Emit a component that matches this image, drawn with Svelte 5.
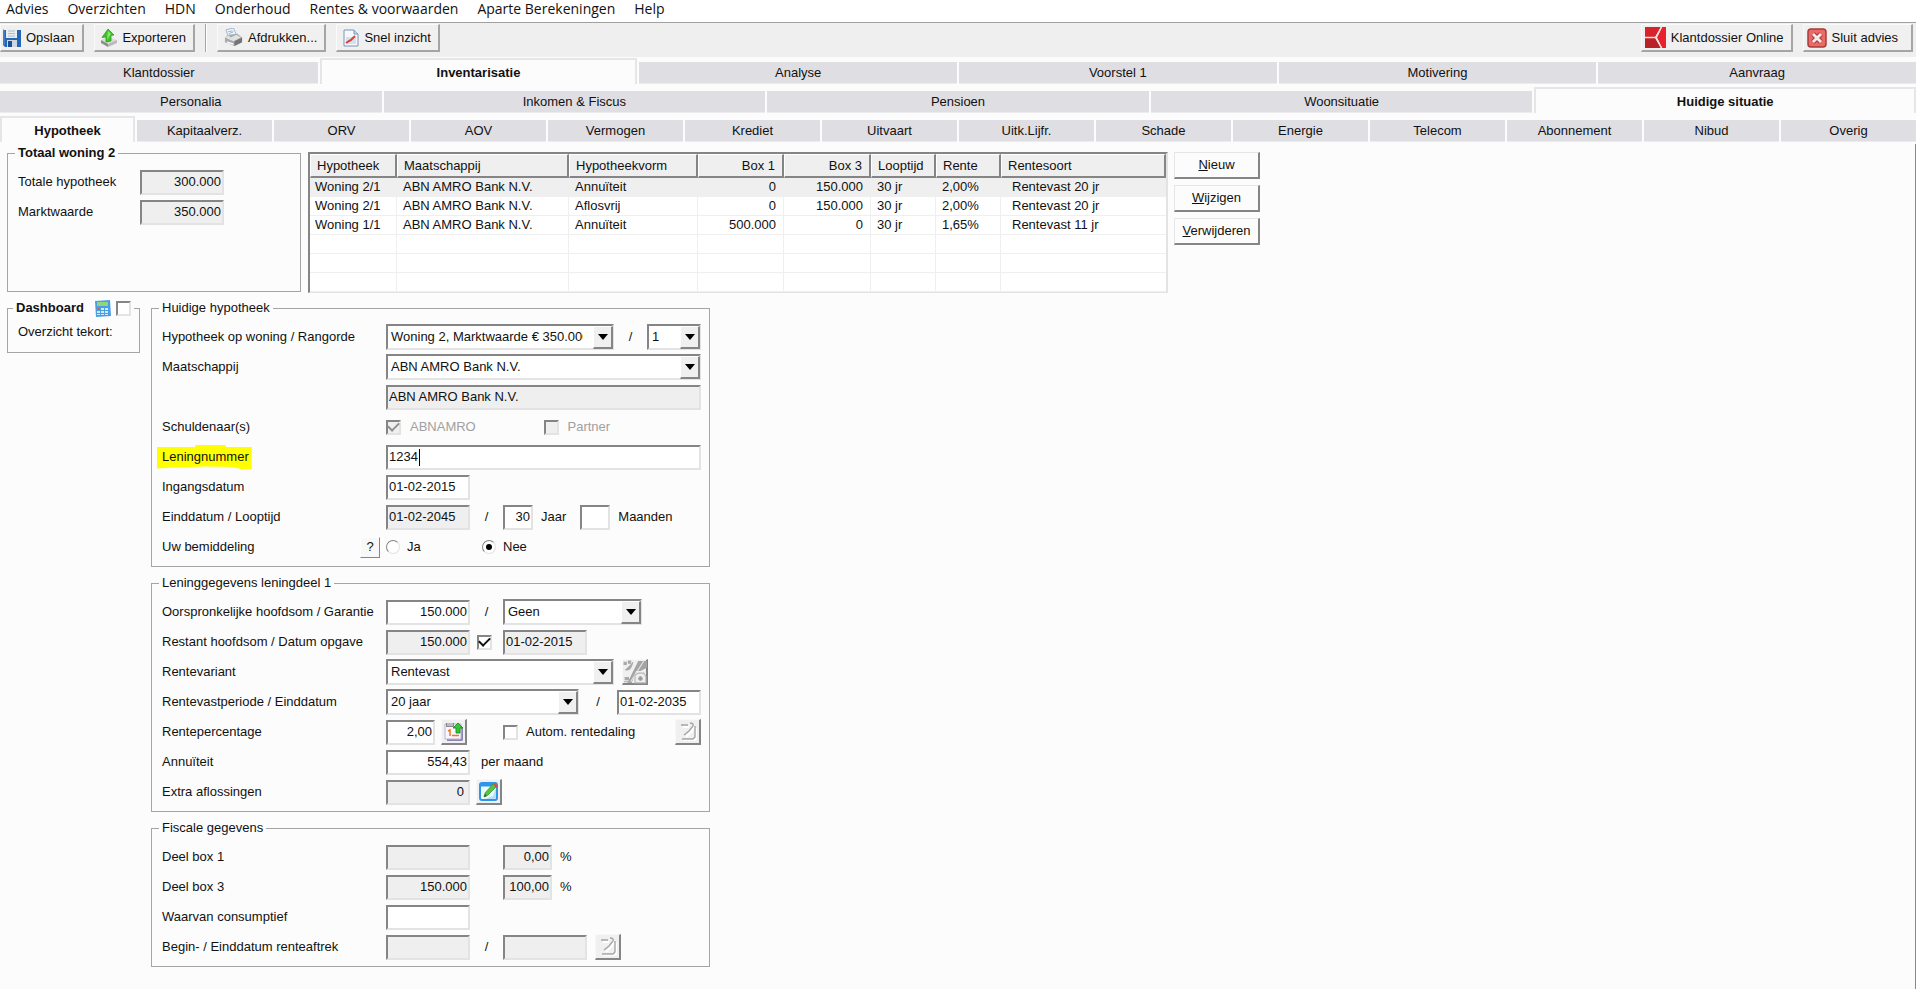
<script lang="ts">
	const menu = ['Advies', 'Overzichten', 'HDN', 'Onderhoud', 'Rentes & voorwaarden', 'Aparte Berekeningen', 'Help'];

	const tabRows = [
		['Klantdossier', 'Inventarisatie', 'Analyse', 'Voorstel 1', 'Motivering', 'Aanvraag'],
		['Personalia', 'Inkomen & Fiscus', 'Pensioen', 'Woonsituatie', 'Huidige situatie'],
		['Hypotheek', 'Kapitaalverz.', 'ORV', 'AOV', 'Vermogen', 'Krediet', 'Uitvaart', 'Uitk.Lijfr.', 'Schade', 'Energie', 'Telecom', 'Abonnement', 'Nibud', 'Overig']
	];
	let active = $state(['Inventarisatie', 'Huidige situatie', 'Hypotheek']);

	const columns = [
		{ label: 'Hypotheek', width: 87 },
		{ label: 'Maatschappij', width: 172 },
		{ label: 'Hypotheekvorm', width: 129 },
		{ label: 'Box 1', width: 86, right: true },
		{ label: 'Box 3', width: 87, right: true },
		{ label: 'Looptijd', width: 65 },
		{ label: 'Rente', width: 65 },
		{ label: 'Rentesoort', width: 165 }
	];
	const loans = [
		['Woning 2/1', 'ABN AMRO Bank N.V.', 'Annuïteit', '0', '150.000', '30 jr', '2,00%', 'Rentevast 20 jr'],
		['Woning 2/1', 'ABN AMRO Bank N.V.', 'Aflosvrij', '0', '150.000', '30 jr', '2,00%', 'Rentevast 20 jr'],
		['Woning 1/1', 'ABN AMRO Bank N.V.', 'Annuïteit', '500.000', '0', '30 jr', '1,65%', 'Rentevast 11 jr']
	];
	const emptyRows = [1, 2, 3];
	let selected = $state(0);
</script>

{#snippet combo(id: string, value: string, size: string, label: string)}
	<span class="combo {size}">
		<select {id} aria-label={label}>
			<option>{value}</option>
		</select>
		<span class="arrow">
			<svg width="10" height="6" viewBox="0 0 10 6"><path d="M0 0h10L5 6z" /></svg>
		</span>
	</span>
{/snippet}

{#snippet noteIcon()}
	<svg width="20" height="20" viewBox="0 0 20 20" fill="none">
		<path d="M4 4h6M17 5v11q0 1-1 1H4M15 3l-2 5-6 6" stroke="#fff" stroke-width="2" transform="translate(1 1)" />
		<path d="M3 3h7M17 4v11l-2 2H4M12 1q4 0 3 3l-4 5-5 4" stroke="#a5a5a5" stroke-width="1.4" />
	</svg>
{/snippet}

<div class="app">
	<nav class="menu">
		{#each menu as item}
			<button>{item}</button>
		{/each}
	</nav>

	<div class="toolbar">
		<button class="tool first">
			<svg width="18" height="18" viewBox="0 0 18 18">
				<path d="M0 1h3v8h11V1h4v17H2l-2-2z" fill="#2467b8" />
				<path d="M3 0h11v9H3z" fill="#e9edf2" />
				<path d="M5 2h7M5 4.500h7M5 7h7" stroke="#b3bcc8" />
				<path d="M4 11h10v7H4z" fill="#cfd6df" />
				<path d="M5 12h4v6H5z" fill="#1d4f96" />
				<path d="M0 1h1v15" stroke="#5b97da" fill="none" />
			</svg>
			Opslaan
		</button>
		<button class="tool">
			<svg width="16" height="18" viewBox="0 0 16 18">
				<path d="M0 11l7-3 9 3-9 5z" fill="#dadada" />
				<path d="M0 11l7 4v3l-7-4z" fill="#8d8d8d" />
				<path d="M7 15l9-4v3l-9 4z" fill="#b9b9b9" />
				<path d="M7 0l6 6-3 .5V12l-5 1V8l-4 .5z" fill="#3fc22b" stroke="#269317" stroke-width=".7" />
				<path d="M7 2l3 3-4 6z" fill="#83ea66" />
			</svg>
			Exporteren
		</button>
		<span class="separator"></span>
		<button class="tool">
			<svg width="19" height="19" viewBox="0 0 20 20">
				<path d="M2 2l8-2 3 7-8 4z" fill="#eef5fc" stroke="#8da5bb" stroke-width=".8" />
				<path d="M4 4l5-1M5 6l5-2" stroke="#8fb5db" />
				<path d="M1 10l4-3 9-1 5 4v5l-8 4-10-4z" fill="#a7a9ab" />
				<path d="M1 10l4-2 2 2 6-3 5 3-8 4z" fill="#e0e1e2" />
				<path d="M11 14l8-4v5l-8 4z" fill="#727578" />
				<path d="M3 14l7 2v2l-7-2z" fill="#f6f6f6" />
			</svg>
			Afdrukken...
		</button>
		<button class="tool">
			<svg width="16" height="18" viewBox="0 0 16 18">
				<path d="M1 1h10l4 4v12H1z" fill="#f5f8fc" stroke="#7896ba" />
				<path d="M11 1v4h4" fill="#c7d7ea" stroke="#7896ba" />
				<path d="M3 8h10v7H3z" fill="#d6dfeb" />
				<path d="M3 14l3-2 2-1 4-4" stroke="#df3d32" stroke-width="2" fill="none" />
			</svg>
			Snel inzicht
		</button>
		<button class="tool push">
			<svg width="21" height="21" viewBox="0 0 21 21">
				<path d="M0 0h16l-6 10H0z" fill="#d8232b" />
				<path d="M0 11h10l6 10H0z" fill="#b82228" />
				<path d="M17 0h4v21h-4l-5-10.500z" fill="#e8212b" />
				<path d="M0 10.500h11L16.500 0M11 10.500L16.500 21" stroke="#f6dede" stroke-width="1.500" fill="none" />
			</svg>
			Klantdossier Online
		</button>
		<button class="tool wide">
			<svg width="20" height="20" viewBox="0 0 20 20">
				<rect x="1" y="1" width="18" height="18" rx="3" fill="#ea6a68" stroke="#a83b3b" stroke-width="1.500" />
				<path d="M6 6l8 8M14 6l-8 8" stroke="#a23737" stroke-width="5" />
				<path d="M6 6l8 8M14 6l-8 8" stroke="#fbe9e9" stroke-width="3" />
			</svg>
			Sluit advies
		</button>
	</div>

	{#each tabRows as row, i}
		<div class="tabs" role="tablist">
			{#each row as tab}
				<button role="tab" aria-selected={active[i] === tab} class:active={active[i] === tab} onclick={() => (active[i] = tab)}>{tab}</button>
			{/each}
		</div>
	{/each}

	<main>
		<div class="overview">
			<fieldset class="total">
				<legend><b>Totaal woning 2</b></legend>
				<div class="row">
					<label for="total-mortgage">Totale hypotheek</label>
					<input id="total-mortgage" class="amount" value="300.000" readonly />
				</div>
				<div class="row">
					<label for="market-value">Marktwaarde</label>
					<input id="market-value" class="amount" value="350.000" readonly />
				</div>
			</fieldset>

			<table>
				<colgroup>
					{#each columns as column}
						<col style="width: {column.width}px" />
					{/each}
				</colgroup>
				<thead>
					<tr>
						{#each columns as column}
							<th class:right={column.right}>{column.label}</th>
						{/each}
					</tr>
				</thead>
				<tbody>
					{#each loans as loan, i}
						<tr class:selected={selected === i} onclick={() => (selected = i)}>
							{#each loan as cell, c}
								<td class:right={columns[c].right}>{cell}</td>
							{/each}
						</tr>
					{/each}
					{#each emptyRows as _}
						<tr>
							{#each columns as _}
								<td></td>
							{/each}
						</tr>
					{/each}
				</tbody>
			</table>

			<div class="actions">
				<button><u>N</u>ieuw</button>
				<button><u>W</u>ijzigen</button>
				<button><u>V</u>erwijderen</button>
			</div>
		</div>

		<div class="detail">
			<fieldset class="dashboard">
				<legend>
					<label for="dashboard"><b>Dashboard</b></label>
					<svg width="16" height="17" viewBox="0 0 16 17">
						<path d="M0 1l15-1 1 16-15 1z" fill="#4a9fe4" />
						<path d="M2 2h11v4H2z" fill="#8fd67c" />
						<path d="M2 8h3v2H2zM6 8h3v2H6zM10 8h3v2h-3zM2 11h3v2H2zM6 11h3v2H6zM10 11h3v2h-3zM2 14h3v1H2zM6 14h3v1H6zM10 14h3v1h-3z" fill="#d3e9fa" />
						<path d="M2 8h3v2H2z" fill="#e0604c" />
					</svg>
					<input id="dashboard" type="checkbox" />
				</legend>
				Overzicht tekort:
			</fieldset>

			<div class="forms">
				<fieldset>
					<legend>Huidige hypotheek</legend>
					<div class="row">
						<label for="property">Hypotheek op woning / Rangorde</label>
						{@render combo('property', 'Woning 2, Marktwaarde € 350.000', 'large', 'Hypotheek op woning')}
						<span class="slash">/</span>
						{@render combo('rank', '1', 'tiny', 'Rangorde')}
					</div>
					<div class="row">
						<label for="company">Maatschappij</label>
						{@render combo('company', 'ABN AMRO Bank N.V.', 'full', 'Maatschappij')}
					</div>
					<div class="row">
						<span class="label"></span>
						<input class="full" aria-label="Naam maatschappij" value="ABN AMRO Bank N.V." readonly />
					</div>
					<div class="row">
						<span class="label">Schuldenaar(s)</span>
						<span class="debtor">
							<input id="debtor" type="checkbox" checked disabled />
							<label for="debtor">ABNAMRO</label>
						</span>
						<span class="debtor">
							<input id="partner" type="checkbox" disabled />
							<label for="partner">Partner</label>
						</span>
					</div>
					<div class="row">
						<label for="loan-number"><mark>Leningnummer</mark></label>
						<span class="editing full">
							<input id="loan-number" class="full" value="1234" />
							<span class="caret"></span>
						</span>
					</div>
					<div class="row">
						<label for="start-date">Ingangsdatum</label>
						<input id="start-date" class="date" value="01-02-2015" />
					</div>
					<div class="row">
						<label for="end-date">Einddatum / Looptijd</label>
						<input id="end-date" class="date" value="01-02-2045" readonly />
						<span class="slash">/</span>
						<input id="years" class="count" value="30" />
						<label class="unit" for="years">Jaar</label>
						<input id="months" class="count months" value="" />
						<label class="unit" for="months">Maanden</label>
					</div>
					<div class="row">
						<span class="label mediation">
							Uw bemiddeling
							<button class="help" aria-label="Help">?</button>
						</span>
						<span class="choice">
							<input id="yes" type="radio" name="mediation" />
							<label for="yes">Ja</label>
						</span>
						<span class="choice">
							<input id="no" type="radio" name="mediation" checked />
							<label for="no">Nee</label>
						</span>
					</div>
				</fieldset>

				<fieldset>
					<legend>Leninggegevens leningdeel 1</legend>
					<div class="row">
						<label for="principal">Oorspronkelijke hoofdsom / Garantie</label>
						<input id="principal" class="amount" value="150.000" />
						<span class="slash">/</span>
						{@render combo('guarantee', 'Geen', 'small', 'Garantie')}
					</div>
					<div class="row">
						<label for="remaining">Restant hoofdsom / Datum opgave</label>
						<input id="remaining" class="amount" value="150.000" readonly />
						<span class="slash tick"><input type="checkbox" aria-label="Datum opgave" checked /></span>
						<input class="date" aria-label="Datum opgave" value="01-02-2015" readonly />
					</div>
					<div class="row">
						<label for="variant">Rentevariant</label>
						{@render combo('variant', 'Rentevast', 'large', 'Rentevariant')}
						<button class="icon spaced" aria-label="Rente" disabled>
							<svg width="24" height="24" viewBox="0 0 22 22">
								<path d="M1 2h2v2H1zM5 1h2v2H5zM2 9q4 1 6-4L9 2M2 16h3v2H2zM1 20h4" fill="#a9a9a9" stroke="#a9a9a9" />
								<path d="M4 21L14 1h8v6l-6 3h-4L8 21z" fill="#a4a4a4" />
								<path d="M19 1L7 20" stroke="#e4e4e4" stroke-width="1" />
								<path d="M11 21V14l3-2h5l2 3v6z" fill="#eee" stroke="#b5b5b5" />
								<path d="M14 17h4M16 15v4" stroke="#999" stroke-width="2" />
							</svg>
						</button>
					</div>
					<div class="row">
						<label for="period">Rentevastperiode / Einddatum</label>
						{@render combo('period', '20 jaar', 'medium', 'Rentevastperiode')}
						<span class="slash grow">/</span>
						<input class="date" aria-label="Einddatum" value="01-02-2035" />
					</div>
					<div class="row">
						<label for="rate">Rentepercentage</label>
						<input id="rate" class="percent" value="2,00" />
						<button class="icon close" aria-label="Rente ophalen">
							<svg width="20" height="20" viewBox="0 0 20 20">
								<path d="M2 5h17v13l-1 1H3z" fill="#8f86b4" />
								<path d="M1 2h16v15H1z" fill="#f7f6fc" stroke="#b9b3d6" />
								<path d="M2 1h8v4H2z" fill="#8b8891" />
								<path d="M4 1v3M6 1v3M8 1v3" stroke="#eee" />
								<path d="M4 9l2-1v6M8 13.500h7" stroke="#ef7622" stroke-width="1.500" fill="none" />
								<path d="M14 1l5 5h-3v5h-4V6H9z" fill="#34c934" stroke="#14821a" stroke-width=".8" />
							</svg>
						</button>
						<span class="auto">
							<input id="auto" type="checkbox" />
							<label for="auto">Autom. rentedaling</label>
						</span>
						<button class="icon end" aria-label="Rentedaling bewerken" disabled>{@render noteIcon()}</button>
					</div>
					<div class="row">
						<label for="annuity">Annuïteit</label>
						<input id="annuity" class="amount" value="554,43" />
						<span class="per-month">per maand</span>
					</div>
					<div class="row">
						<label for="extra">Extra aflossingen</label>
						<input id="extra" class="amount extra" value="0" readonly />
						<button class="icon close" aria-label="Extra aflossingen bewerken">
							<svg width="20" height="20" viewBox="0 0 20 20">
								<rect x="1" y="1" width="17" height="17" rx="2" fill="#eef8ff" stroke="#2f95e8" stroke-width="2" />
								<path d="M1 3h13" stroke="#2f95e8" stroke-width="3" />
								<path d="M17 6v11H6l8-3z" fill="#b6def8" />
								<path d="M5 15l1-4 8-9 3 3-8 8z" fill="#58c43c" stroke="#2d9527" stroke-width=".7" />
								<path d="M14 2l2-1 3 3-2 2z" fill="#e34a3c" />
								<path d="M5 15l1-3 2 2z" fill="#31583a" />
							</svg>
						</button>
					</div>
				</fieldset>

				<fieldset>
					<legend>Fiscale gegevens</legend>
					<div class="row">
						<label for="box1">Deel box 1</label>
						<input id="box1" class="amount" value="" readonly />
						<span class="slash"></span>
						<input id="box1-part" class="percent" value="0,00" readonly />
						<label class="unit" for="box1-part">%</label>
					</div>
					<div class="row">
						<label for="box3">Deel box 3</label>
						<input id="box3" class="amount" value="150.000" readonly />
						<span class="slash"></span>
						<input id="box3-part" class="percent" value="100,00" readonly />
						<label class="unit" for="box3-part">%</label>
					</div>
					<div class="row">
						<label for="consumptive">Waarvan consumptief</label>
						<input id="consumptive" class="amount" value="" />
					</div>
					<div class="row">
						<label for="deduction">Begin- / Einddatum renteaftrek</label>
						<input id="deduction" class="date" value="" readonly />
						<span class="slash">/</span>
						<input class="date" aria-label="Einddatum renteaftrek" value="" readonly />
						<button class="icon spaced" aria-label="Renteaftrek bewerken" disabled>{@render noteIcon()}</button>
					</div>
				</fieldset>
			</div>
		</div>
	</main>
</div>

<style>
	:global(body) {
		margin: 0;
		background: #fcfcfc;
	}

	.app {
		display: flex;
		flex-direction: column;
		min-height: 100vh;
		font-family: 'Liberation Sans', Arial, sans-serif;
		font-size: 13px;
		line-height: 16px;
		color: #111;
	}

	.app * {
		box-sizing: border-box;
	}

	button,
	input,
	select {
		font: inherit;
		color: inherit;
		margin: 0;
		border-radius: 0;
	}

	.menu {
		display: flex;
		gap: 19px;
		height: 23px;
		padding-left: 6px;
		align-items: flex-start;
		background: #fff;
		border-bottom: 1px solid #a0a0a0;
	}

	.menu button {
		border: 0;
		padding: 0;
		background: none;
		font-family: 'Open Sans', 'Noto Sans', sans-serif;
		font-size: 14px;
		line-height: 18px;
	}

	.toolbar {
		display: flex;
		gap: 10px;
		padding: 1px 3px 5px 0;
		background: #efefef;
	}

	.tool {
		display: flex;
		align-items: center;
		gap: 5px;
		height: 28px;
		padding: 0 7px 0 6px;
		background: #f0f0f0;
		border: 1px solid #fafafa;
		border-right: 2px solid #a5a5a5;
		border-bottom: 2px solid #a5a5a5;
		white-space: nowrap;
	}

	.tool.first {
		padding-left: 2px;
		padding-right: 8px;
	}

	.tool.wide {
		padding-right: 13px;
		padding-left: 3px;
	}

	.tool.push {
		margin-left: auto;
		padding-left: 3px;
	}

	.separator {
		width: 2px;
		background: #a5a5a5;
		border-right: 1px solid #fff;
		height: 28px;
	}

	.tabs {
		display: grid;
		grid-auto-flow: column;
		grid-auto-columns: minmax(0, 1fr);
		gap: 2px;
		height: 29px;
		padding: 1px 0 2px;
		align-items: end;
	}

	.tabs button {
		height: 22px;
		padding: 0;
		border: 0;
		border-bottom: 1px solid #ececee;
		background: #dfdee3;
		white-space: nowrap;
	}

	.tabs button.active {
		height: 26px;
		padding-top: 2px;
		background: #fcfcfc;
		border: 2px solid #e6e6e8;
		border-bottom: 0;
		font-weight: bold;
	}

	main {
		flex: 1;
		padding: 1px 0 12px 7px;
		border-right: 1px solid #8a8a8a;
	}

	.overview,
	.detail {
		display: flex;
		align-items: flex-start;
	}

	.detail {
		margin-top: 7px;
		gap: 11px;
	}

	fieldset {
		margin: 0;
		min-width: 0;
		padding: 6px 8px 4px 10px;
		border: 1px solid #a5a5a5;
	}

	legend {
		display: flex;
		align-items: center;
		height: 16px;
		margin-left: -3px;
		padding: 0 3px;
	}

	.total {
		width: 294px;
		height: 147px;
	}

	.dashboard {
		width: 133px;
		padding: 8px 0 12px 10px;
	}

	.dashboard legend {
		gap: 5px;
		margin-left: -5px;
	}

	.dashboard svg {
		margin-left: 6px;
	}

	.forms {
		display: flex;
		flex-direction: column;
		gap: 8px;
		width: 559px;
	}

	.row {
		display: flex;
		align-items: center;
		height: 30px;
		white-space: nowrap;
	}

	.row > label:first-child,
	.label {
		flex: none;
		width: 224px;
	}

	.total .row > label:first-child {
		width: 122px;
	}

	input:not([type]) {
		height: 25px;
		padding: 0 4px 2px 1px;
		border: 2px solid #e3e3e3;
		border-top-color: #858585;
		border-left-color: #858585;
		background: #fff;
		outline: 0;
	}

	input:read-only:not([type]) {
		background: #efefef;
	}

	.amount,
	.date {
		width: 84px;
	}

	.amount,
	.count,
	.percent {
		text-align: right;
	}

	input.amount:not([type]),
	input.count:not([type]),
	input.percent:not([type]) {
		padding-right: 1px;
	}

	input.extra:not([type]) {
		padding-right: 4px;
	}

	.count {
		width: 30px;
	}

	.percent {
		width: 49px;
	}

	.months {
		margin-left: 14px;
	}

	.full {
		width: 315px;
	}

	.slash {
		display: flex;
		justify-content: center;
		width: 33px;
	}

	.tick {
		justify-content: flex-start;
		padding-left: 7px;
	}

	.grow {
		flex: 1;
	}

	.unit {
		padding-left: 8px;
	}

	.combo {
		position: relative;
		height: 26px;
	}

	.combo.large {
		width: 228px;
	}

	.combo.medium {
		width: 193px;
	}

	.combo.small {
		width: 139px;
	}

	.combo.tiny {
		width: 54px;
	}

	select {
		appearance: none;
		width: 100%;
		height: 100%;
		padding: 0 29px 0 3px;
		border: 2px solid #e3e3e3;
		border-top-color: #858585;
		border-left-color: #858585;
		background: #fff;
	}

	.arrow {
		position: absolute;
		top: 2px;
		right: 1px;
		bottom: 1px;
		width: 20px;
		display: flex;
		align-items: center;
		justify-content: center;
		background: #f0f0f0;
		border: 1px solid #fff;
		border-right: 2px solid #858585;
		border-bottom: 2px solid #858585;
		pointer-events: none;
	}

	input[type='checkbox'],
	input[type='radio'] {
		appearance: none;
		flex: none;
		display: grid;
		place-items: center;
		width: 15px;
		height: 15px;
		border: 2px solid #e3e3e3;
		border-top-color: #858585;
		border-left-color: #858585;
		background: #fff;
	}

	input[type='checkbox']:checked::before {
		content: '';
		width: 9px;
		height: 5px;
		margin-top: -3px;
		border-left: 2px solid #111;
		border-bottom: 2px solid #111;
		transform: rotate(-45deg);
	}

	input[type='checkbox']:disabled {
		background: #efefef;
	}

	input[type='checkbox']:disabled::before {
		border-color: #8f8f8f;
	}

	input:disabled + label {
		color: #a0a0a0;
	}

	input[type='radio'] {
		width: 14px;
		height: 14px;
		border-width: 1px;
		border-radius: 50%;
	}

	input[type='radio']:checked::before {
		content: '';
		width: 6px;
		height: 6px;
		border-radius: 50%;
		background: #000;
	}

	.debtor {
		display: flex;
		align-items: center;
		gap: 9px;
		width: 160px;
	}

	.choice {
		display: flex;
		align-items: center;
		gap: 7px;
		width: 96px;
	}

	.auto {
		display: flex;
		align-items: center;
		gap: 8px;
		margin-left: 36px;
	}

	.per-month {
		padding-left: 11px;
	}

	.mediation {
		display: flex;
		justify-content: space-between;
		align-items: center;
		padding-right: 6px;
	}

	.help {
		width: 20px;
		height: 21px;
		padding: 0;
		background: #f8f8f8;
		border: 1px solid #fff;
		border-right: 1px solid #858585;
		border-bottom: 1px solid #858585;
	}

	.icon {
		display: flex;
		align-items: center;
		justify-content: center;
		width: 26px;
		height: 26px;
		padding: 0;
		background: #f0f0f0;
		border: 1px solid #f8f8f8;
		border-right: 2px solid #858585;
		border-bottom: 2px solid #858585;
	}

	.icon svg {
		flex: none;
	}

	.spaced {
		margin-left: 8px;
	}

	.close {
		margin-left: 6px;
	}

	.end {
		margin-left: auto;
	}

	mark {
		display: inline-block;
		margin-left: -5px;
		padding: 4px 3px 4px 5px;
		background: #ff0;
		color: inherit;
		clip-path: polygon(0 8%, 40% 8%, 41% 0, 72% 0, 73% 8%, 100% 8%, 100% 100%, 88% 100%, 80% 92%, 50% 90%, 20% 94%, 0 98%);
	}

	.editing {
		position: relative;
	}

	.caret {
		position: absolute;
		left: 33px;
		top: 4px;
		width: 1px;
		height: 17px;
		background: #000;
	}

	table {
		flex: none;
		width: 859px;
		margin: 7px 6px 0 7px;
		table-layout: fixed;
		border-collapse: separate;
		border-spacing: 0;
		border: 2px solid #e3e3e3;
		border-top-color: #858585;
		border-left-color: #858585;
		border-bottom-width: 1px;
		background: #fff;
	}

	th,
	td {
		padding: 0 7px;
		text-align: left;
		font-weight: normal;
		white-space: nowrap;
	}

	th {
		height: 24px;
		padding-left: 6px;
		background: #efefef;
		border: 1px solid #fff;
		border-right: 2px solid #858585;
		border-bottom: 2px solid #858585;
	}

	td {
		height: 19px;
		padding-left: 6px;
		border-right: 1px solid #efefef;
		border-bottom: 1px solid #efefef;
	}

	td:first-child {
		padding-left: 5px;
	}

	td:last-child {
		padding-left: 11px;
		border-right: 0;
	}

	.right {
		text-align: right;
	}

	.selected td {
		background: #efefef;
	}

	.actions {
		display: flex;
		flex-direction: column;
		gap: 6px;
		margin-top: 7px;
	}

	.actions button {
		width: 86px;
		height: 27px;
		padding: 0;
		background: #fcfcfc;
		border: 1px solid #e6e6e6;
		border-right: 2px solid #858585;
		border-bottom: 2px solid #858585;
	}
</style>
